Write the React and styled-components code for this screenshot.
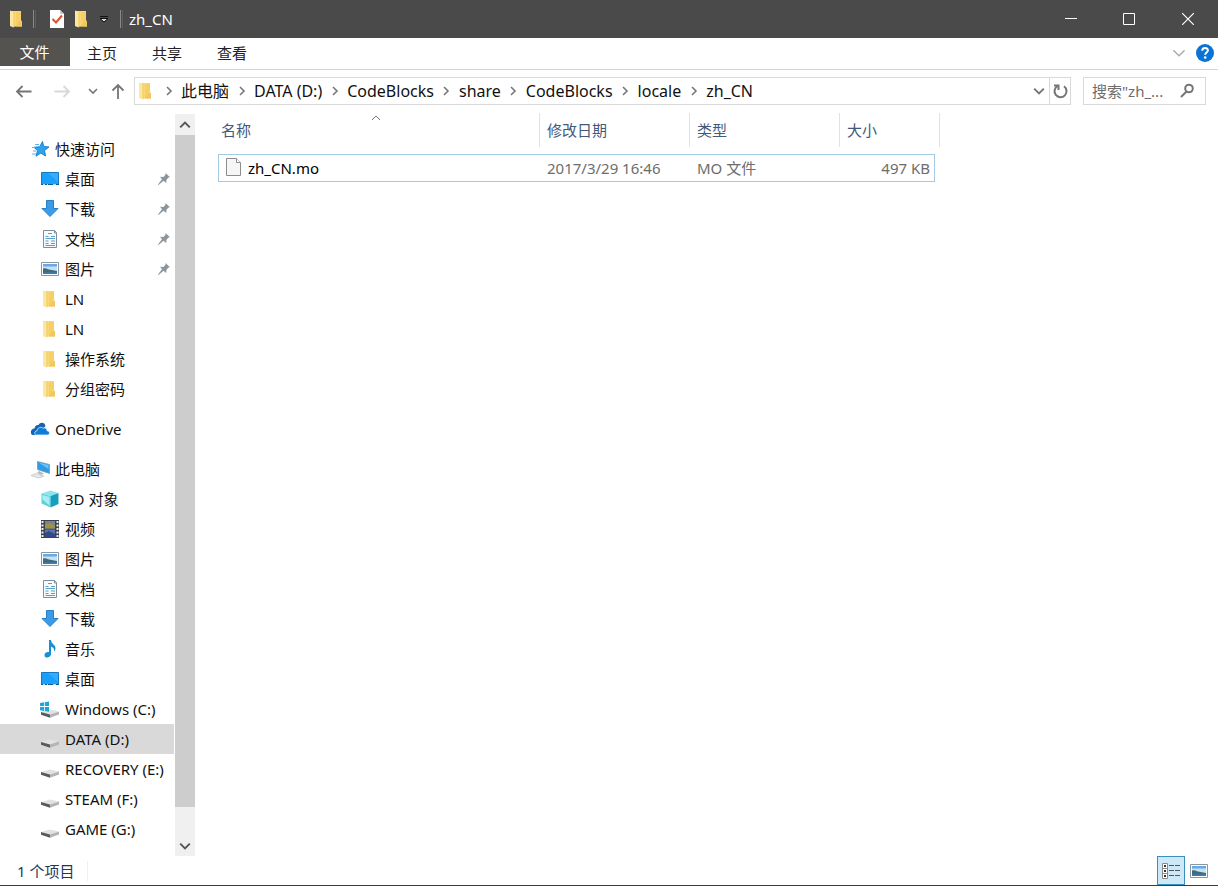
import React from 'react';
import styled, { createGlobalStyle, css } from 'styled-components';

const GlobalStyle = createGlobalStyle`
  * {
    box-sizing: border-box;
  }

  body {
    margin: 0;
    background-color: #fff;
  }

  body, button, input, table {
    font-family: 'Noto Sans', 'Noto Sans CJK SC', sans-serif;
    font-size: 15px;
    line-height: 20px;
    font-weight: 400;
  }

  svg {
    display: block;
    flex: none;
  }
`;

const Window = styled.div`
  display: flex;
  flex-direction: column;
  min-height: 100vh;
  color: #000;
  border-bottom: 1px solid #3c3c3c;
`;

const IconButton = styled.button`
  display: flex;
  align-items: center;
  justify-content: center;
  flex: none;
  width: ${props => props.$width || 20}px;
  height: ${props => props.$height || 28}px;
  padding: 0;
  border: 0;
  background: none;
  color: ${props => props.$color || '#757575'};
`;

const TitleBar = styled.header`
  display: flex;
  align-items: center;
  height: 38px;
  padding-left: 7px;
  background-color: #4a4a4a;
  color: #fff;
`;

const TitleDivider = styled.span`
  width: 3px;
  height: 18px;
  margin: 0 6px;
  border-left: 1px solid #8a8a8a;
  border-right: 1px solid #5e5e5e;
`;

const QuickTools = styled.div`
  display: flex;
  padding-left: 2px;
`;

const Title = styled.h1`
  flex: 1;
  margin: 0;
  font-size: 15px;
  font-weight: 400;
  line-height: 20px;
`;

const Ribbon = styled.nav`
  display: flex;
  height: 32px;
  border-bottom: 1px solid #d4d5d6;
`;

const RibbonTab = styled.button`
  width: 65px;
  height: 30px;
  padding: 0 1px 0 0;
  border: 0;
  background: none;
  color: #222;

  ${props => props.$file && css`
    width: 70px;
    height: 28px;
    background-color: #555350;
    color: #fff;
  `}
`;

const RibbonEnd = styled.div`
  display: flex;
  align-items: center;
  gap: 6px;
  height: 30px;
  margin-left: auto;
  padding-right: 3px;
`;

const AddressRow = styled.div`
  display: flex;
  padding: 7px 12px 8px 9px;
`;

const NavButtons = styled.div`
  display: flex;
  width: 125px;
`;

const AddressBar = styled.div`
  display: flex;
  flex: 1;
  min-width: 0;
  height: 28px;
  border: 1px solid #d9d9d9;
`;

const Crumbs = styled.ol`
  display: flex;
  align-items: center;
  flex: 1;
  min-width: 0;
  margin: 0;
  padding: 0 0 0 1px;
  list-style: none;
  overflow: hidden;
  font-size: 16px;
`;

const Crumb = styled.li`
  display: flex;
  align-items: center;
  white-space: nowrap;

  a {
    color: #111;
    text-decoration: none;
  }
`;

const CrumbArrow = styled.span`
  display: flex;
  justify-content: center;
  width: 25px;
  color: #777;
`;

const Refresh = styled(IconButton)`
  height: 26px;
  border-left: 1px solid #d9d9d9;
`;

const SearchBox = styled.label`
  display: flex;
  align-items: center;
  width: 123px;
  height: 28px;
  margin-left: 12px;
  padding: 0 10px 0 8px;
  border: 1px solid #d9d9d9;
  color: #757575;

  input {
    flex: 1;
    width: 0;
    min-width: 0;
    padding: 0;
    border: 0;
    outline: 0;
    background: none;
  }

  input::placeholder {
    color: #6d6d6d;
    opacity: 1;
  }
`;

const Body = styled.div`
  display: flex;
  flex: 1;
`;

const Sidebar = styled.aside`
  display: flex;
  flex-direction: column;
  gap: 10px;
  width: 174px;
  margin-right: 1px;
  padding: 21px 0 11px;
`;

const Tree = styled.ul`
  margin: 0;
  padding: 0;
  list-style: none;
`;

const TreeItem = styled.li`
  background-color: ${props => (props.$selected ? '#d9d9d9' : 'transparent')};
`;

const TreeLink = styled.a`
  display: flex;
  align-items: center;
  gap: 5px;
  height: 30px;
  padding: 0 3px 0 ${props => (props.$root ? 30 : 40)}px;
  color: #111;
  text-decoration: none;
  white-space: nowrap;
`;

const TreeLabel = styled.span`
  flex: 1;
`;

const ScrollBar = styled.div`
  display: flex;
  flex-direction: column;
  width: 20px;
  margin-top: 1px;
  background-color: #f0f0f0;
`;

const ScrollThumb = styled.div`
  flex: 1;
  margin-bottom: 28px;
  background-color: #cdcdcd;
`;

const Content = styled.main`
  flex: 1;
  min-width: 0;
  padding-left: 23px;
`;

const FileTable = styled.table`
  width: 722px;
  table-layout: fixed;
  border-collapse: separate;
  border-spacing: 0;

  th, td {
    padding: 0 7px;
    text-align: left;
    font-weight: 400;
    white-space: nowrap;
  }

  th {
    position: relative;
    height: 34px;
    border-right: 1px solid #e2e2e2;
    color: #44597a;
  }

  th:first-child {
    padding-left: 3px;
  }

  td {
    height: 28px;
    border: solid #a3cbe6;
    border-width: 1px 0;
    color: #6d6d6d;
  }

  td:first-child {
    border-left-width: 1px;
    color: #000;
  }

  td:last-child {
    padding-right: 4px;
    border-right-width: 1px;
    text-align: right;
  }
`;

const FileRows = styled.tbody`
  &::before {
    content: '';
    display: table-row;
    height: 7px;
  }
`;

const SortMark = styled.span`
  position: absolute;
  top: 0;
  left: 50%;
  margin-left: -8px;
`;

const FileName = styled.span`
  display: flex;
  align-items: center;
  gap: 6px;
`;

const StatusBar = styled.footer`
  display: flex;
  align-items: center;
  height: 29px;
  padding: 0 5px 0 17px;
  color: #1e395b;
`;

const StatusText = styled.span`
  width: 71px;
  border-right: 1px solid #f0f0f0;
`;

const ViewButtons = styled.div`
  display: flex;
  margin-left: auto;
`;

const ViewButton = styled(IconButton)`
  width: 28px;
  height: 29px;
  ${props => props.$active && css`
    border: 1px solid #3b8fbd;
    background-color: #cde8f6;
  `}
`;

const Chevron = ({ dir = 'down', size = 10, color = 'currentColor', weight = 1.6 }) => {
  const paths = {
    down: 'M1 3l4 4 4-4',
    up: 'M1 7l4-4 4 4',
    right: 'M3 1l4 4-4 4',
  };
  return (
    <svg width={size} height={size} viewBox="0 0 10 10" fill="none" stroke={color} strokeWidth={weight}>
      <path d={paths[dir]} />
    </svg>
  );
};

const Arrow = ({ dir }) => {
  const paths = {
    left: 'M16.500 9.500H2M7.500 4L2 9.500 7.500 15',
    right: 'M1.500 9.500H16M10.500 4L16 9.500 10.500 15',
    up: 'M9 17V3M3.500 8.500L9 3l5.500 5.500',
  };
  return (
    <svg width="18" height="18" viewBox="0 0 18 18" fill="none" stroke="currentColor" strokeWidth="1.800">
      <path d={paths[dir]} />
    </svg>
  );
};

const FolderIcon = () => (
  <svg width="20" height="20" viewBox="0 0 20 20">
    <path d="M4.500 2H14v9.500l1 .500v5.500H5z" fill="#f9d877" />
    <path d="M9 3h5v8l-5 5z" fill="#f6cf67" />
    <path d="M3 1.500l3.500 1.200V18.500L3 17z" fill="#fce7a2" />
    <path d="M6.500 2.700h1V18l-1 .500z" fill="#f2cb68" />
    <path d="M12 12.500l3-.500v5.500H8.500z" fill="#f3c659" />
  </svg>
);

const CheckDocIcon = () => (
  <svg width="20" height="20" viewBox="0 0 20 20">
    <path d="M3 1h10l4 4v14H3z" fill="#fff" />
    <path d="M13 1v4h4z" fill="#c9c9c9" />
    <path d="M5.500 10l3.500 3.500 6-7" fill="none" stroke="#d9532c" strokeWidth="2" />
  </svg>
);

const StarIcon = () => (
  <svg width="20" height="20" viewBox="0 0 20 20">
    <path d="M12.500 2.500l1.200 5 5.300.500-4.500 3.500 1 5.500-4.700-3-4.800 3.200 1.500-5.500L4 8.300l5.700-.500z" fill="#2ba3ee" stroke="#1a83cd" />
    <path d="M5 5.500h4M2 8.500h3M3 12h3M2 15h4" stroke="#5ab6ee" />
  </svg>
);

const DesktopIcon = () => (
  <svg width="20" height="20" viewBox="0 0 20 20">
    <path d="M1.500 3.500h17v12h-17z" fill="#18a0fb" stroke="#1778bd" />
    <path d="M1 15.500h18" stroke="#0c5c99" />
    <path d="M3 15.500h2M7 15.500h1M13 15.500h3" stroke="#a7dcff" />
    <path d="M8 4h10v9z" fill="#35acff" />
  </svg>
);

const DownloadIcon = () => (
  <svg width="20" height="20" viewBox="0 0 20 20">
    <path d="M6.500 1.500h7v8h4.500l-8 8-8-8h4.500z" fill="#3b9be6" stroke="#2680c8" />
  </svg>
);

const DocIcon = () => (
  <svg width="20" height="20" viewBox="0 0 20 20">
    <path d="M3.500 1.500h11l2 2v15h-13z" fill="#f6fafc" stroke="#7e8d98" />
    <path d="M14.500 1.500v2.500h2" fill="none" stroke="#7e8d98" />
    <path d="M8 4.500h4M5.500 7.500h3M11 7.500h4M5.500 9.500h9.500M5.500 12h3M11 12h4M5.500 14.500h3M11 14.500h4M5.500 16.500h9.500" stroke="#5b9ec9" />
  </svg>
);

const PictureIcon = () => (
  <svg width="20" height="20" viewBox="0 0 20 20">
    <path d="M1.500 3.500h17v13h-17z" fill="#fff" stroke="#8797a3" />
    <path d="M3 5h14v10H3z" fill="#c3e2f5" />
    <path d="M3 5h14v2.500H3z" fill="#6aa8df" />
    <path d="M3 9.500c3-1 4 .300 6 1l8 1.500v3H3z" fill="#42697b" />
    <path d="M3 13.500l14-.500V15H3z" fill="#3c7cac" />
  </svg>
);

const CloudIcon = () => (
  <svg width="20" height="20" viewBox="0 0 20 20">
    <path d="M1 14c-.500-3 1.500-4.500 3.500-4.500C5 7 6.500 5.500 8.500 6c1.500-3.500 6.500-3 7 1l-8 9H3c-1.200 0-2-1-2-2z" fill="#1264b5" />
    <path d="M6.500 16c-2.500 0-2.500-4 .500-4.300.500-3 3.500-4.500 6-2.500 2-1 4 .300 4 2.500 3.500.300 3 4.300.500 4.300z" fill="#0f7bda" stroke="#fff" strokeWidth=".7" />
  </svg>
);

const ComputerIcon = () => (
  <svg width="20" height="20" viewBox="0 0 20 20">
    <path d="M7.500 2.500l12 3v9l-12-4z" fill="#2c9ce8" stroke="#8496a3" strokeWidth=".8" />
    <path d="M8.500 3.500L18.500 6v4z" fill="#6cc2f7" />
    <path d="M9 12l5 2.500-3 1.500-4-2.500z" fill="#b3bcc2" />
    <path d="M1 16.500l5-2 8 2.500-5 2z" fill="#e4eaed" stroke="#b8c1c6" strokeWidth=".7" />
  </svg>
);

const CubeIcon = () => (
  <svg width="20" height="20" viewBox="0 0 20 20">
    <path d="M1.500 4.500L10.500 1.500l8 2.500-8 3z" fill="#8ce5ee" />
    <path d="M1.500 4.500l9 2.500v11.500l-9-4z" fill="#5bd0df" />
    <path d="M18.500 4l-8 3v11.500l8-3.500z" fill="#169fbd" />
    <path d="M2.500 6l7 2v8.500l-7-6z" fill="#a8edf2" />
  </svg>
);

const VideoIcon = () => (
  <svg width="20" height="20" viewBox="0 0 20 20">
    <path d="M1 1h18v18H1z" fill="#3d424a" />
    <path d="M2.500 2v16M17.500 2v16" stroke="#eef0f2" strokeWidth="2" strokeDasharray="2 1.500" />
    <path d="M5 2h10v7.500H5z" fill="#7a8497" />
    <path d="M5 6l5-2 5 3v2.500H5z" fill="#a09242" />
    <path d="M5 10.500h10V18H5z" fill="#5972be" />
    <path d="M5 14l4-2 6 3v3H5z" fill="#354889" />
  </svg>
);

const MusicIcon = () => (
  <svg width="20" height="20" viewBox="0 0 20 20">
    <path d="M9 1h2c0 4 4.500 4.500 4.500 8 0 1.500-.500 2.500-1.500 3.500.500-3-1-4-3-5V15c0 4-6.500 5-6.500 1 0-2.500 2.500-3.500 4.500-3z" fill="#168fd6" />
  </svg>
);

const DriveIcon = ({ windows }) => (
  <svg width="20" height="20" viewBox="0 0 20 20">
    <path d="M1 13L10 10.500l9 2-9 3z" fill="#e2e2e2" />
    <path d="M1 13l9 2.500v3.200l-9-3z" fill="#5a5a5a" />
    <path d="M10 15.500l9-3v3L10 18.700z" fill="#b4b4b4" />
    {windows && <path d="M0 4l4-.700V7H0zM4.800 3.200L9 2.500V7H4.800zM0 8h4v4l-4-.700zM4.800 8H9v4.700l-4.200-.700z" fill="#16a9dc" />}
  </svg>
);

const PinIcon = () => (
  <svg width="14" height="14" viewBox="0 0 14 14">
    <path d="M8.500 1L13 5.200l-1.500.300-2 2.200-.300 3.300L6.500 8.800 1.500 13 1 12.500 5 7.200 3 4.800l3.500.200 2-2.200z" fill="#8b959b" />
  </svg>
);

const HelpIcon = () => (
  <svg width="20" height="20" viewBox="0 0 20 20">
    <circle cx="10" cy="10" r="9" fill="#0a74d4" />
    <path d="M7.200 7.800c0-3.800 6-3.600 5.700-.300-.200 2-2.700 2-2.700 4.200" fill="none" stroke="#fff" strokeWidth="2" />
    <circle cx="10.200" cy="14.500" r="1.300" fill="#fff" />
  </svg>
);

const RefreshIcon = () => (
  <svg width="18" height="18" viewBox="0 0 18 18" fill="none" stroke="currentColor" strokeWidth="2">
    <path d="M13 4.300a6 6 0 1 1-6.500-.300" />
    <path d="M3 3.500h4.500V8" />
  </svg>
);

const SearchIcon = () => (
  <svg width="16" height="16" viewBox="0 0 16 16" fill="none" stroke="currentColor" strokeWidth="2">
    <circle cx="10" cy="5.500" r="3.800" />
    <path d="M7.500 8.500L2 14" />
  </svg>
);

const FileIcon = () => (
  <svg width="16" height="20" viewBox="0 0 16 20">
    <path d="M.500.500h10l4 4v13H.500z" fill="#f6f6f6" stroke="#8c8c8c" />
    <path d="M10.500.500v4h4" fill="#fff" stroke="#8c8c8c" />
  </svg>
);

const DetailsIcon = () => (
  <svg width="20" height="18" viewBox="0 0 20 18">
    <path d="M1.500 1.500h5v15h-5zM1.500 6.500h5M1.500 11.500h5" fill="#fff" stroke="#8a8a8a" />
    <path d="M3 4h2M3 9h2M3 14h2" stroke="#333" strokeWidth="2" />
    <path d="M8 3.500h5M14 3.500h5M8 8.500h5M14 8.500h5M8 13.500h5M14 13.500h5" stroke="#555" />
  </svg>
);

const crumbs = ['此电脑', 'DATA (D:)', 'CodeBlocks', 'share', 'CodeBlocks', 'locale', 'zh_CN'];

const groups = [
  {
    name: '快速访问',
    icon: <StarIcon />,
    items: [
      { name: '桌面', icon: <DesktopIcon />, pinned: true },
      { name: '下载', icon: <DownloadIcon />, pinned: true },
      { name: '文档', icon: <DocIcon />, pinned: true },
      { name: '图片', icon: <PictureIcon />, pinned: true },
      { name: 'LN', icon: <FolderIcon /> },
      { name: 'LN', icon: <FolderIcon /> },
      { name: '操作系统', icon: <FolderIcon /> },
      { name: '分组密码', icon: <FolderIcon /> },
    ],
  },
  { name: 'OneDrive', icon: <CloudIcon />, items: [] },
  {
    name: '此电脑',
    icon: <ComputerIcon />,
    items: [
      { name: '3D 对象', icon: <CubeIcon /> },
      { name: '视频', icon: <VideoIcon /> },
      { name: '图片', icon: <PictureIcon /> },
      { name: '文档', icon: <DocIcon /> },
      { name: '下载', icon: <DownloadIcon /> },
      { name: '音乐', icon: <MusicIcon /> },
      { name: '桌面', icon: <DesktopIcon /> },
      { name: 'Windows (C:)', icon: <DriveIcon windows /> },
      { name: 'DATA (D:)', icon: <DriveIcon />, selected: true },
      { name: 'RECOVERY (E:)', icon: <DriveIcon /> },
      { name: 'STEAM (F:)', icon: <DriveIcon /> },
      { name: 'GAME (G:)', icon: <DriveIcon /> },
    ],
  },
];

const files = [
  { name: 'zh_CN.mo', date: '2017/3/29 16:46', type: 'MO 文件', size: '497 KB' },
];

const TopBar = () => (
  <TitleBar>
    <FolderIcon />
    <TitleDivider />
    <QuickTools>
      <IconButton $width={25} aria-label="属性"><CheckDocIcon /></IconButton>
      <IconButton $width={25} aria-label="新建文件夹"><FolderIcon /></IconButton>
      <IconButton aria-label="自定义快速访问工具栏">
        <svg width="10" height="8" viewBox="0 0 10 8">
          <path d="M1 1.500h8" stroke="#111" />
          <path d="M1 3.500h8L5 7z" fill="#ddd" stroke="#111" />
        </svg>
      </IconButton>
    </QuickTools>
    <TitleDivider />
    <Title>zh_CN</Title>
    <IconButton $width={58} $height={38} $color="#fff" aria-label="最小化">
      <svg width="12" height="12" viewBox="0 0 12 12"><path d="M0 5.500h12" stroke="currentColor" /></svg>
    </IconButton>
    <IconButton $width={58} $height={38} $color="#fff" aria-label="最大化">
      <svg width="12" height="12" viewBox="0 0 12 12">
        <path d="M.5.5h11v11H.5z" fill="none" stroke="currentColor" />
      </svg>
    </IconButton>
    <IconButton $width={60} $height={38} $color="#fff" aria-label="关闭">
      <svg width="12" height="12" viewBox="0 0 12 12">
        <path d="M0 0l12 12M12 0L0 12" stroke="currentColor" strokeWidth="1.200" />
      </svg>
    </IconButton>
  </TitleBar>
);

const Address = () => (
  <AddressRow>
    <NavButtons>
      <IconButton $width={30} aria-label="后退"><Arrow dir="left" /></IconButton>
      <IconButton $width={46} $color="#d8d8d8" aria-label="前进"><Arrow dir="right" /></IconButton>
      <IconButton $width={15} aria-label="最近浏览的位置"><Chevron /></IconButton>
      <IconButton $width={36} aria-label="上移"><Arrow dir="up" /></IconButton>
    </NavButtons>
    <AddressBar>
      <Crumbs>
        <FolderIcon />
        {crumbs.map((crumb, i) => (
          <Crumb key={i}>
            <CrumbArrow><Chevron dir="right" /></CrumbArrow>
            <a href="#path">{crumb}</a>
          </Crumb>
        ))}
      </Crumbs>
      <IconButton $height={26} aria-label="以前的位置"><Chevron size={12} /></IconButton>
      <Refresh $width={21} aria-label="刷新"><RefreshIcon /></Refresh>
    </AddressBar>
    <SearchBox>
      <input type="text" aria-label="搜索" placeholder={'搜索"zh_...'} />
      <SearchIcon />
    </SearchBox>
  </AddressRow>
);

const TreeGroup = ({ group }) => (
  <Tree>
    <TreeItem>
      <TreeLink href="#group" $root>
        {group.icon}
        <TreeLabel>{group.name}</TreeLabel>
      </TreeLink>
    </TreeItem>
    {group.items.map((item, i) => (
      <TreeItem key={i} $selected={item.selected}>
        <TreeLink href="#item">
          {item.icon}
          <TreeLabel>{item.name}</TreeLabel>
          {item.pinned && <PinIcon />}
        </TreeLink>
      </TreeItem>
    ))}
  </Tree>
);

const FileList = () => (
  <FileTable>
    <colgroup>
      <col width="322" />
      <col width="150" />
      <col width="150" />
      <col width="95" />
      <col width="5" />
    </colgroup>
    <thead>
      <tr>
        <th>
          名称
          <SortMark><Chevron dir="up" color="#777" weight={1} /></SortMark>
        </th>
        <th>修改日期</th>
        <th>类型</th>
        <th colSpan={2}>大小</th>
      </tr>
    </thead>
    <FileRows>
      {files.map(file => (
        <tr key={file.name}>
          <td>
            <FileName>
              <FileIcon />
              {file.name}
            </FileName>
          </td>
          <td>{file.date}</td>
          <td>{file.type}</td>
          <td>{file.size}</td>
        </tr>
      ))}
    </FileRows>
  </FileTable>
);

const App = () => (
  <Window lang="zh-CN">
    <GlobalStyle />
    <TopBar />
    <Ribbon>
      <RibbonTab $file>文件</RibbonTab>
      <RibbonTab>主页</RibbonTab>
      <RibbonTab>共享</RibbonTab>
      <RibbonTab>查看</RibbonTab>
      <RibbonEnd>
        <IconButton aria-label="展开功能区"><Chevron size={14} color="#aaa" weight={1} /></IconButton>
        <IconButton aria-label="帮助"><HelpIcon /></IconButton>
      </RibbonEnd>
    </Ribbon>
    <Address />
    <Body>
      <Sidebar>
        {groups.map(group => <TreeGroup key={group.name} group={group} />)}
      </Sidebar>
      <ScrollBar>
        <IconButton $height={21} $color="#555" aria-label="向上滚动"><Chevron dir="up" size={12} /></IconButton>
        <ScrollThumb />
        <IconButton $height={21} $color="#555" aria-label="向下滚动"><Chevron size={12} /></IconButton>
      </ScrollBar>
      <Content>
        <FileList />
      </Content>
    </Body>
    <StatusBar>
      <StatusText>1 个项目</StatusText>
      <ViewButtons>
        <ViewButton $active aria-label="详细信息"><DetailsIcon /></ViewButton>
        <ViewButton aria-label="大缩略图"><PictureIcon /></ViewButton>
      </ViewButtons>
    </StatusBar>
  </Window>
);

export default App;
